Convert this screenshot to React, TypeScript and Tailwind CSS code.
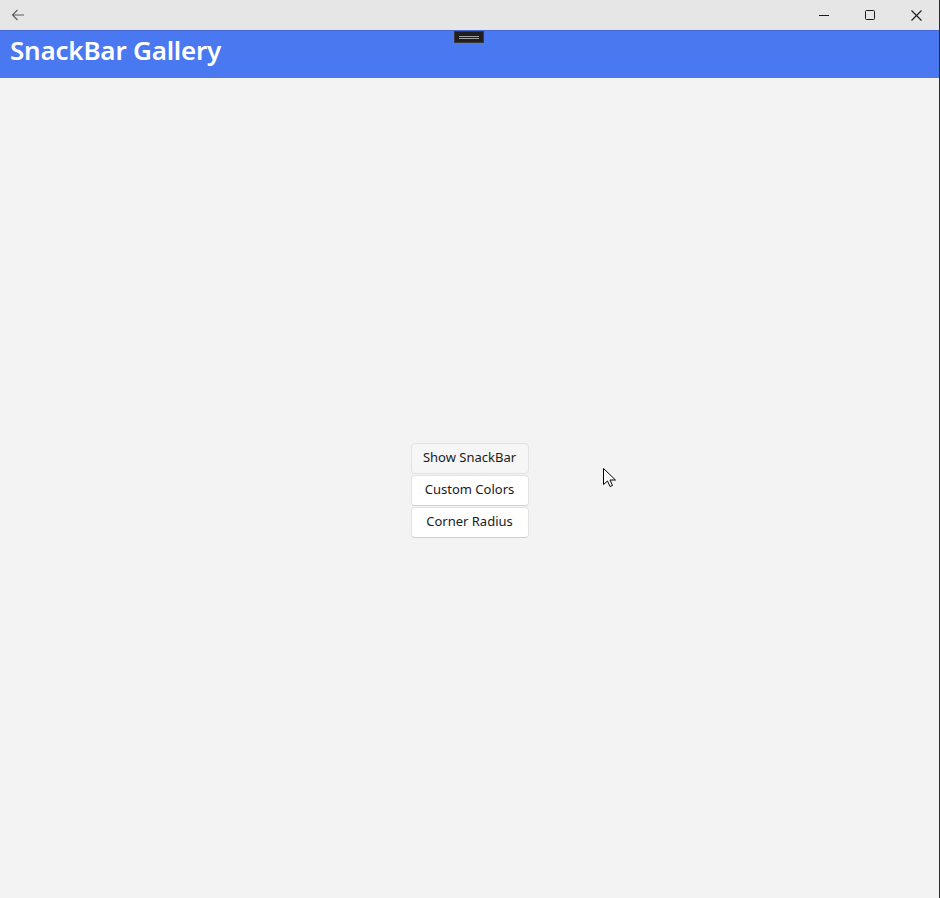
import React from 'react';

const font = { fontFamily: '"Noto Sans", "Open Sans", sans-serif' };

const App: React.FC = () => {
  return (
    <div className="h-[898px] w-[940px] flex flex-col bg-[#f3f3f3] border-r border-[#2b2b2b] overflow-hidden relative" style={font}>
      {/* title bar */}
      <div className="h-[30px] bg-[#e6e6e6] flex items-center justify-between">
        <button className="w-[36px] h-[30px] flex items-center justify-center text-[#5c5c5c]">
          <svg width="14" height="14" viewBox="0 0 14 14" fill="none" stroke="currentColor" strokeWidth="1.1">
            <path d="M13 7H1.5M6.5 2L1.5 7l5 5" />
          </svg>
        </button>
        <div className="flex h-full text-[#1a1a1a]">
          <div className="w-[46px] flex items-center justify-center">
            <svg width="10" height="10" viewBox="0 0 10 10" stroke="currentColor" strokeWidth="1">
              <path d="M0 5.5h10" />
            </svg>
          </div>
          <div className="w-[46px] flex items-center justify-center">
            <svg width="10" height="10" viewBox="0 0 10 10" fill="none" stroke="currentColor" strokeWidth="1">
              <rect x="0.5" y="0.5" width="9" height="9" rx="1" />
            </svg>
          </div>
          <div className="w-[46px] flex items-center justify-center">
            <svg width="11" height="11" viewBox="0 0 11 11" stroke="currentColor" strokeWidth="1.1">
              <path d="M0.5 0.5l10 10M10.5 0.5l-10 10" />
            </svg>
          </div>
        </div>
      </div>

      {/* header */}
      <div className="h-[48px] bg-[#4a78f0] border-t border-[#4469d6] flex items-center px-[10px] pb-[9px] relative">
        <h1 className="text-white text-[26px] font-semibold leading-none tracking-[-0.2px]">SnackBar Gallery</h1>
        <div className="absolute left-[454px] top-0 w-[30px] h-[12px] bg-[#1f1f1f] border border-[#3a3a3a] flex items-center justify-center">
          <div className="w-[20px] h-[3px] border-y border-[#a0a0a0]" />
        </div>
      </div>

      {/* content */}
      <div className="flex-1 flex flex-col items-center justify-center gap-[1px] pt-[4px]">
        <button className="w-[118px] h-[31px] rounded-[4px] bg-[#f6f6f6] border border-[#e2e2e2] text-[13px] text-[#1b1b1b]">
          Show SnackBar
        </button>
        <button className="w-[118px] h-[31px] rounded-[4px] bg-white border border-[#e2e2e2] border-b-[#d0d0d0] text-[13px] text-[#1b1b1b]">
          Custom Colors
        </button>
        <button className="w-[118px] h-[31px] rounded-[4px] bg-white border border-[#e2e2e2] border-b-[#d0d0d0] text-[13px] text-[#1b1b1b]">
          Corner Radius
        </button>
      </div>

      {/* pointer */}
      <svg className="absolute left-[603px] top-[468px]" width="13" height="20" viewBox="0 0 13 20">
        <path d="M0.5 0.5v16l4-3.5 2.5 5.5 2.5-1-2.5-5.5h5.5z" fill="white" stroke="black" strokeWidth="1" />
      </svg>
    </div>
  );
};

export default App;
